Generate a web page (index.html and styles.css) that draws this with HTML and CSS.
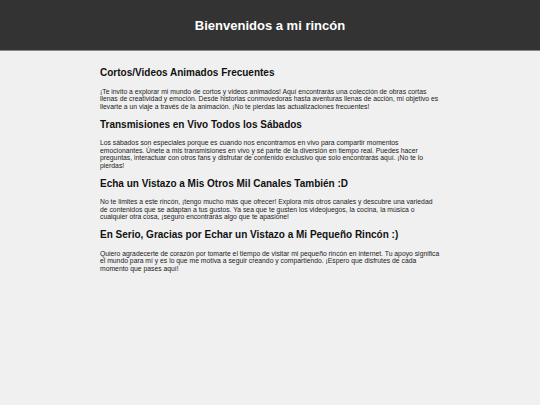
FILE: index.html
```html
<!DOCTYPE html>
<html lang="es">
<head>
<meta charset="utf-8">
<title>Bienvenidos a mi rincón</title>
<link rel="stylesheet" href="styles.css">
</head>
<body>
<header class="site-header">
  <h1 class="site-title">Bienvenidos a mi rincón</h1>
</header>
<main class="content">
  <section class="section">
    <h2 class="section-title">Cortos/Videos Animados Frecuentes</h2>
    <p class="section-text">¡Te invito a explorar mi mundo de cortos y videos animados! Aquí encontrarás una colección de obras cortas llenas de creatividad y emoción. Desde historias conmovedoras hasta aventuras llenas de acción, mi objetivo es llevarte a un viaje a través de la animación. ¡No te pierdas las actualizaciones frecuentes!</p>
  </section>
  <section class="section">
    <h2 class="section-title">Transmisiones en Vivo Todos los Sábados</h2>
    <p class="section-text">Los sábados son especiales porque es cuando nos encontramos en vivo para compartir momentos emocionantes. Únete a mis transmisiones en vivo y sé parte de la diversión en tiempo real. Puedes hacer preguntas, interactuar con otros fans y disfrutar de contenido exclusivo que solo encontrarás aquí. ¡No te lo pierdas!</p>
  </section>
  <section class="section">
    <h2 class="section-title">Echa un Vistazo a Mis Otros Mil Canales También :D</h2>
    <p class="section-text">No te limites a este rincón, ¡tengo mucho más que ofrecer! Explora mis otros canales y descubre una variedad de contenidos que se adaptan a tus gustos. Ya sea que te gusten los videojuegos, la cocina, la música o cualquier otra cosa, ¡seguro encontrarás algo que te apasione!</p>
  </section>
  <section class="section">
    <h2 class="section-title">En Serio, Gracias por Echar un Vistazo a Mi Pequeño Rincón :)</h2>
    <p class="section-text">Quiero agradecerte de corazón por tomarte el tiempo de visitar mi pequeño rincón en internet. Tu apoyo significa el mundo para mí y es lo que me motiva a seguir creando y compartiendo. ¡Espero que disfrutes de cada momento que pases aquí!</p>
  </section>
</main>
</body>
</html>
```
FILE: styles.css
```css
html, body {
  margin: 0;
  padding: 0;
}
body {
  background: #f0f0f0;
  color: #222;
  font-family: "Liberation Sans", Arial, sans-serif;
}
.site-header {
  background: #333;
  height: 50px;
  display: flex;
  align-items: center;
  justify-content: center;
  border-bottom: 1px solid #888;
}
.site-title {
  margin: 0;
  color: #fff;
  font-size: 13px;
  font-weight: bold;
}
.content {
  width: 340px;
  margin: 0 auto;
  padding-top: 16px;
}
.section-title {
  margin: 0;
  font-size: 10px;
  font-weight: bold;
  color: #111;
  line-height: 12px;
}
.section-text {
  margin: 8.5px 0 8.5px;
  font-size: 6.8px;
  line-height: 7.5px;
  color: #222;
}
```
